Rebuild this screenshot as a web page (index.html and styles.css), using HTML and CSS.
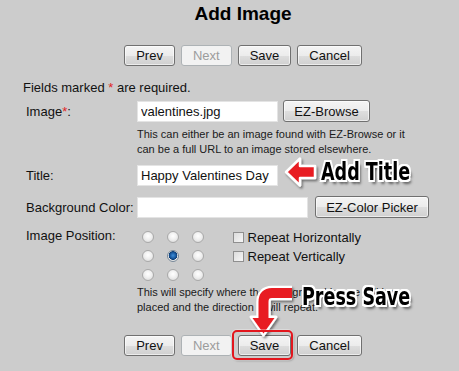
FILE: index.html
```html
<!DOCTYPE html>
<html>
<head>
<meta charset="utf-8">
<link rel="stylesheet" href="styles.css">
</head>
<body>
<div class="page">
  <h1 class="title">Add Image</h1>
  <div class="btnrow top">
    <button class="btn">Prev</button>
    <button class="btn" disabled>Next</button>
    <button class="btn">Save</button>
    <button class="btn">Cancel</button>
  </div>
  <p class="req">Fields marked <span class="star">*</span> are required.</p>

  <div class="form">
    <div class="row row-image">
      <label class="lbl">Image<span class="star">*</span>:</label>
      <div class="field">
        <div class="line">
          <input class="txt w141" type="text" value="valentines.jpg">
          <button class="btn sm">EZ-Browse</button>
        </div>
        <p class="help">This can either be an image found with EZ-Browse or it<br>can be a full URL to an image stored elsewhere.</p>
      </div>
    </div>
    <div class="row row-title">
      <label class="lbl">Title:</label>
      <div class="field">
        <div class="line">
          <input class="txt w141" type="text" value="Happy Valentines Day">
        </div>
      </div>
    </div>
    <div class="row row-bg">
      <label class="lbl">Background Color:</label>
      <div class="field">
        <div class="line gap7">
          <input class="txt w171" type="text" value="">
          <button class="btn picker">EZ-Color Picker</button>
        </div>
      </div>
    </div>
    <div class="row row-pos">
      <label class="lbl">Image Position:</label>
      <div class="field">
        <div class="posline">
          <div class="radios">
            <span class="cell"><input type="radio" name="p" class="rad"></span>
            <span class="cell"><input type="radio" name="p" class="rad"></span>
            <span class="cell"><input type="radio" name="p" class="rad"></span>
            <span class="cell"><input type="radio" name="p" class="rad"></span>
            <span class="cell"><input type="radio" name="p" class="rad" checked></span>
            <span class="cell"><input type="radio" name="p" class="rad"></span>
            <span class="cell"><input type="radio" name="p" class="rad"></span>
            <span class="cell"><input type="radio" name="p" class="rad"></span>
            <span class="cell"><input type="radio" name="p" class="rad"></span>
          </div>
          <div class="checks">
            <label class="chk"><input type="checkbox" class="cb"><span>Repeat Horizontally</span></label>
            <label class="chk"><input type="checkbox" class="cb"><span>Repeat Vertically</span></label>
          </div>
        </div>
        <p class="help help2">This will specify where the Background Image will be<br>placed and the direction it will repeat.</p>
      </div>
    </div>
  </div>

  <div class="btnrow bottom">
    <button class="btn">Prev</button>
    <button class="btn" disabled>Next</button>
    <button class="btn">Save</button>
    <button class="btn">Cancel</button>
  </div>
</div>

<svg class="arrows" width="459" height="371" viewBox="0 0 459 371" xmlns="http://www.w3.org/2000/svg">
  <defs>
    <filter id="sh" x="-20%" y="-20%" width="150%" height="150%">
      <feDropShadow dx="1.5" dy="2" stdDeviation="1.2" flood-color="#000" flood-opacity="0.45"/>
    </filter>
  </defs>
  <g filter="url(#sh)">
    <polygon points="286,172 300,158.5 300,166 315,166 315,178 300,178 300,185.5" fill="#e81c22" stroke="#fff" stroke-width="2.5" stroke-linejoin="round"/>
  </g>
  <g filter="url(#sh)">
    <path d="M292 293 L272 293 Q263.5 293 263.5 302 L263.5 319" fill="none" stroke="#fff" stroke-width="14.5"/>
    <polygon points="251,317 276,317 263.5,335" fill="#fff" stroke="#fff" stroke-width="3" stroke-linejoin="round"/>
    <path d="M292 293 L272 293 Q263.5 293 263.5 302 L263.5 319" fill="none" stroke="#e81c22" stroke-width="10"/>
    <polygon points="252.5,318 274.5,318 263.5,333.5" fill="#e81c22"/>
  </g>
</svg>
<div class="hilite"></div>
<div class="note note-title">Add Title</div>
<div class="note note-save">Press Save</div>
</body>
</html>
```

FILE: styles.css
```css
html, body {
  margin: 0;
  padding: 0;
}
body {
  background: #cccccc;
  width: 459px;
  height: 371px;
  overflow: hidden;
  position: relative;
  font-family: "Liberation Sans", Arial, sans-serif;
  font-size: 13px;
  color: #111;
}
.page {
  padding: 3px 0 0 23px;
}
.title {
  margin: 0;
  font-size: 19px;
  line-height: 22px;
  font-weight: bold;
  text-align: center;
  padding-left: 4px;
  color: #000;
}
.btnrow {
  display: flex;
  justify-content: center;
  gap: 6px;
  padding-left: 4px;
}
.btnrow.top {
  margin-top: 20px;
}
.btnrow.bottom {
  margin-top: 20px;
}
.btn {
  font-family: "Liberation Sans", Arial, sans-serif;
  font-size: 13px;
  height: 21px;
  padding: 0 11px;
  border: 1px solid #707070;
  border-radius: 3px;
  color: #111;
  background: linear-gradient(#f4f4f4, #ececec 50%, #dedede 51%, #d0d0d0);
  box-shadow: inset 0 0 0 1px rgba(255,255,255,0.6);
  line-height: 19px;
  margin: 0;
}
.btn:disabled {
  color: #9c9c9c;
  border-color: #adb2b5;
  background: #f2f2f2;
  box-shadow: none;
}
.btn.sm {
  width: 87px;
  height: 22px;
  padding: 0;
}
.btn.picker {
  width: 114px;
  height: 22px;
  padding: 0;
}
.req {
  margin: 14px 0 0 0;
  line-height: 16px;
}
.star {
  color: #e02424;
}
.form {
  margin-left: 3px;
  margin-top: 4px;
}
.row {
  display: grid;
  grid-template-columns: 111px 1fr;
}
.lbl {
  line-height: 16px;
  padding-top: 4px;
}
.line {
  display: flex;
  align-items: center;
  gap: 5px;
  height: 22px;
}
.line.gap7 {
  gap: 7px;
}
.txt {
  box-sizing: border-box;
  height: 21px;
  border: 1px solid #e4e4e4;
  background: #fff;
  font-family: "Liberation Sans", Arial, sans-serif;
  font-size: 13px;
  padding: 0 3px;
  margin: 0;
  color: #111;
  outline: none;
}
.w141 { width: 141px; }
.w171 { width: 171px; }
.help {
  margin: 5px 0 0 0;
  font-size: 11px;
  line-height: 15px;
  color: #1a1a1a;
}
.row-title {
  margin-top: 7px;
}
.row-bg {
  margin-top: 10px;
}
.row-pos {
  margin-top: 9px;
}
.row-pos .lbl {
  padding-top: 1px;
}
.posline {
  display: flex;
  align-items: flex-start;
}
.radios {
  display: grid;
  grid-template-columns: repeat(3, 25px);
  grid-auto-rows: 19px;
  margin-left: -1.5px;
}
.cell {
  display: flex;
  align-items: center;
  justify-content: center;
}
.rad {
  appearance: none;
  -webkit-appearance: none;
  width: 12px;
  height: 12px;
  margin: 0;
  border-radius: 50%;
  border: 1px solid #a9a9a9;
  background: radial-gradient(circle at 50% 40%, #ffffff 0%, #f0f0f0 45%, #d4d4d4 100%);
  box-sizing: border-box;
}
.rad:checked {
  background: radial-gradient(circle at 50% 45%, #3f8ed8 0%, #1c5ea6 35%, #0e3f78 55%, #e8e8e8 62%, #d6d6d6 100%);
  border-color: #7a8a9a;
}
.checks {
  margin-left: 22px;
  margin-top: 1px;
  display: flex;
  flex-direction: column;
}
.chk {
  display: flex;
  align-items: center;
  height: 19px;
  line-height: 16px;
  font-size: 13px;
}
.cb {
  appearance: none;
  -webkit-appearance: none;
  width: 11px;
  height: 11px;
  margin: 0 4px 0 0;
  box-sizing: border-box;
  border: 1px solid #8f8f8f;
  background: linear-gradient(135deg, #dcdcdc, #f6f6f6);
}
.help2 {
  margin-top: 1px;
}
.arrows {
  position: absolute;
  left: 0;
  top: 0;
  pointer-events: none;
}
.hilite {
  position: absolute;
  left: 232px;
  top: 330px;
  width: 57px;
  height: 26px;
  border: 2px solid #e3161d;
  border-radius: 5px;
  box-shadow: 0 0 0 1px rgba(255,255,255,0.35), 1px 1px 2px rgba(0,0,0,0.3);
}
.note {
  position: absolute;
  font-family: "DejaVu Sans Condensed", "DejaVu Sans", sans-serif;
  font-weight: bold;
  font-size: 25px;
  line-height: 25px;
  color: #000;
  white-space: nowrap;
  transform: scaleX(0.78);
  transform-origin: 0 0;
  text-shadow:
    -2px -2px 0 #fff, 0 -2px 0 #fff, 2px -2px 0 #fff,
    -2px 0 0 #fff, 2px 0 0 #fff,
    -2px 2px 0 #fff, 0 2px 0 #fff, 2px 2px 0 #fff,
    -1px -2px 0 #fff, 1px -2px 0 #fff, -1px 2px 0 #fff, 1px 2px 0 #fff,
    3px 4px 3px rgba(0,0,0,0.55);
}
.note-title {
  left: 321px;
  top: 159px;
}
.note-save {
  left: 302px;
  top: 284px;
}
```
